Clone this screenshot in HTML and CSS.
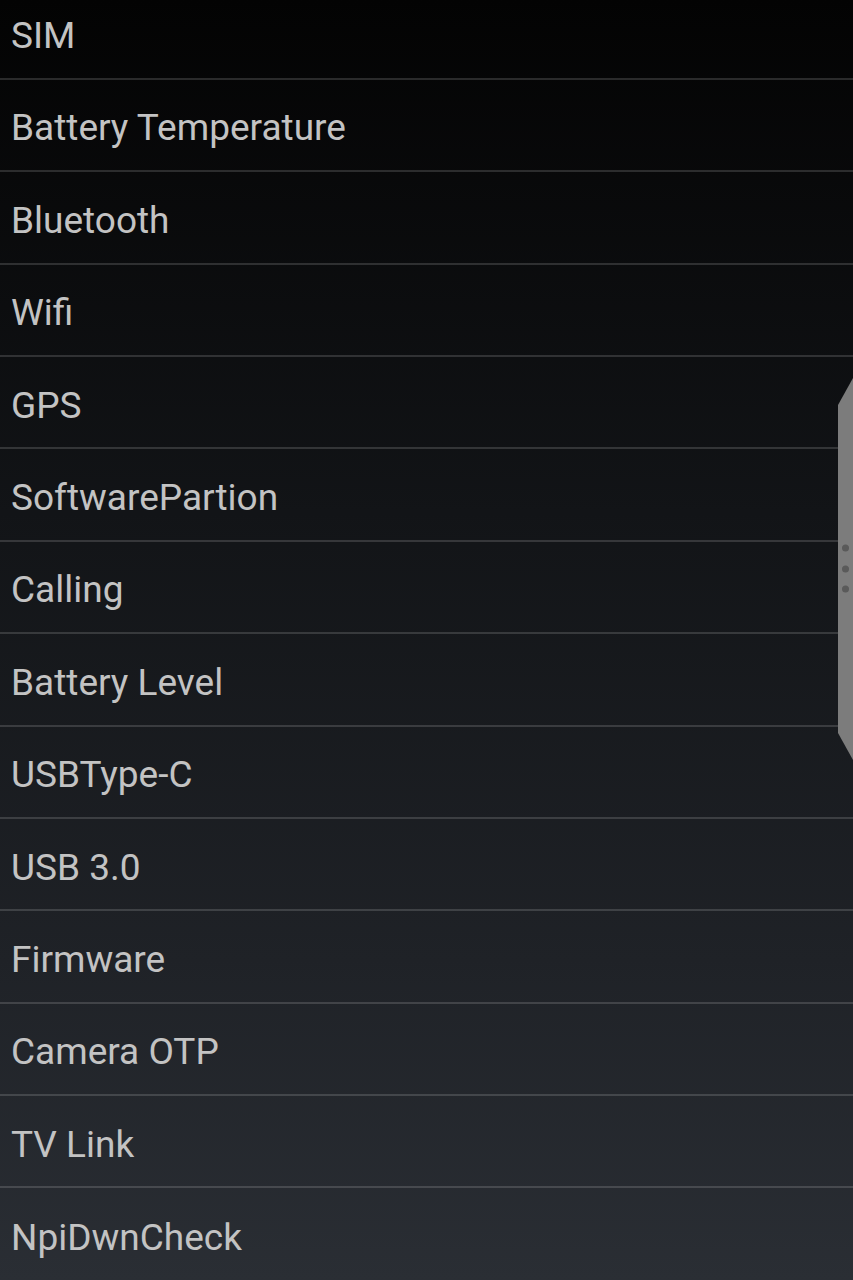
FILE: index.html
```html
<!DOCTYPE html>
<html lang="en">
<head>
  <meta charset="UTF-8" />
  <meta name="viewport" content="width=device-width, initial-scale=1.0" />
  <title>Test Menu</title>
  <link rel="stylesheet" href="styles.css">
</head>
<body>
  <ul class="menu">
    <li>SIM</li>
    <li>Battery Temperature</li>
    <li>Bluetooth</li>
    <li>Wifi</li>
    <li>GPS</li>
    <li>SoftwarePartion</li>
    <li>Calling</li>
    <li>Battery Level</li>
    <li>USBType-C</li>
    <li>USB 3.0</li>
    <li>Firmware</li>
    <li>Camera OTP</li>
    <li>TV Link</li>
    <li>NpiDwnCheck</li>
  </ul>

  <!-- edge panel handle -->
  <svg class="handle" width="15" height="382" viewBox="0 0 15 382">
    <polygon points="15,0 0,27 0,355 15,382" fill="#7c7c7c" />
    <circle cx="7.5" cy="170" r="3.5" fill="#5a5a5a" />
    <circle cx="7.5" cy="191" r="3.5" fill="#5a5a5a" />
    <circle cx="7.5" cy="211" r="3.5" fill="#5a5a5a" />
  </svg>
</body>
</html>
```

FILE: styles.css
```css
* {
  margin: 0;
  padding: 0;
  box-sizing: border-box;
}
html, body {
  height: 100%;
}
body {
  overflow: hidden;
  position: relative;
  font-family: Roboto, "Noto Sans", sans-serif;
  background: linear-gradient(to bottom, #030303 0%, #121417 40%, #1f2227 75%, #2a2e34 100%);
}
.menu {
  list-style: none;
  margin-top: -12.6px;
}
.menu li {
  height: 92.4px;
  display: flex;
  align-items: center;
  padding: 6px 0 0 11px;
  font-size: 37px;
  color: #c3c3c3;
  border-bottom: 2px solid rgba(255, 255, 255, 0.15);
}
.menu li:last-child {
  border-bottom: none;
}
.handle {
  position: absolute;
  top: 378px;
  right: 0;
}
```
